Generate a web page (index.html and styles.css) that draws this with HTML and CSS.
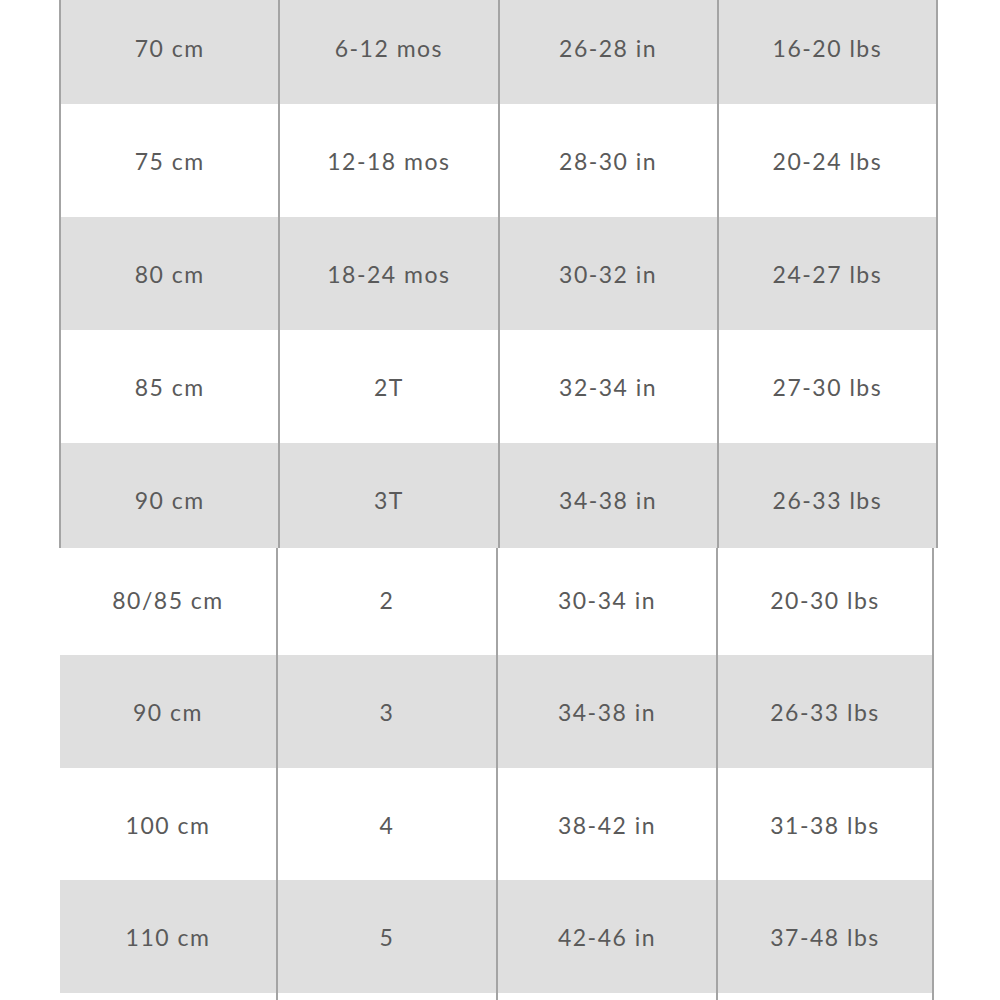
FILE: index.html
```html
<!DOCTYPE html>
<html>
<head>
<meta charset="utf-8">
<link rel="stylesheet" href="styles.css">
</head>
<body>
<div class="page">
  <div class="chart chart-top">
    <div class="row grey first"><div class="cell">70 cm</div><div class="cell">6-12 mos</div><div class="cell">26-28 in</div><div class="cell">16-20 lbs</div></div>
    <div class="row"><div class="cell">75 cm</div><div class="cell">12-18 mos</div><div class="cell">28-30 in</div><div class="cell">20-24 lbs</div></div>
    <div class="row grey"><div class="cell">80 cm</div><div class="cell">18-24 mos</div><div class="cell">30-32 in</div><div class="cell">24-27 lbs</div></div>
    <div class="row"><div class="cell">85 cm</div><div class="cell">2T</div><div class="cell">32-34 in</div><div class="cell">27-30 lbs</div></div>
    <div class="row grey last"><div class="cell">90 cm</div><div class="cell">3T</div><div class="cell">34-38 in</div><div class="cell">26-33 lbs</div></div>
  </div>
  <div class="chart chart-bottom">
    <div class="row first"><div class="cell">80/85 cm</div><div class="cell">2</div><div class="cell">30-34 in</div><div class="cell">20-30 lbs</div></div>
    <div class="row grey"><div class="cell">90 cm</div><div class="cell">3</div><div class="cell">34-38 in</div><div class="cell">26-33 lbs</div></div>
    <div class="row"><div class="cell">100 cm</div><div class="cell">4</div><div class="cell">38-42 in</div><div class="cell">31-38 lbs</div></div>
    <div class="row grey"><div class="cell">110 cm</div><div class="cell">5</div><div class="cell">42-46 in</div><div class="cell">37-48 lbs</div></div>
    <div class="row"><div class="cell"></div><div class="cell"></div><div class="cell"></div><div class="cell"></div></div>
  </div>
</div>
</body>
</html>
```
FILE: styles.css
```css
html, body {
  margin: 0;
  padding: 0;
  background: #ffffff;
}
.page {
  height: 1000px;
  overflow: hidden;
  font-family: Lato, "Liberation Sans", sans-serif;
  font-size: 23px;
  letter-spacing: 1.5px;
  color: #5a5a5a;
}
.chart {
  display: flex;
  flex-direction: column;
  box-sizing: border-box;
}
.chart-top {
  margin-top: -9px;
  margin-left: 59px;
  width: 879px;
  border-left: 2px solid #a4a4a4;
}
.chart-bottom {
  margin-left: 60px;
  width: 874px;
}
.row {
  display: grid;
  grid-template-columns: repeat(4, 1fr);
  height: 113px;
  background: #ffffff;
}
.chart-bottom .row {
  grid-template-columns: 218px 220px 220px 216px;
  height: 112.5px;
}
.row.grey {
  background: #dfdfdf;
}
.chart-top .row.last {
  height: 105px;
}
.chart-bottom .row.first {
  height: 107px;
}
.cell {
  box-sizing: border-box;
  border-right: 2px solid #a4a4a4;
  text-align: center;
  line-height: 24px;
  padding-top: 45px;
}
.chart-bottom .row.first .cell {
  padding-top: 40px;
}
```
